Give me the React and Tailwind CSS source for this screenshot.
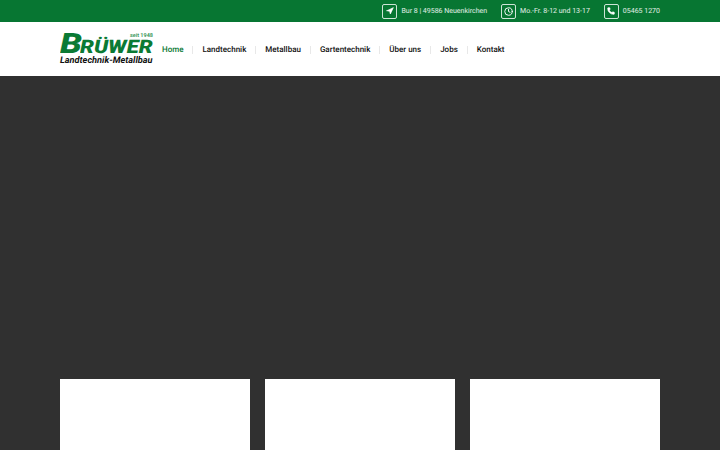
import { Clock, Phone, Navigation } from 'lucide-react';

const navItems = ['Home', 'Landtechnik', 'Metallbau', 'Gartentechnik', 'Über uns', 'Jobs', 'Kontakt'];

function TopItem({ icon, text }) {
  return (
    <div className="flex items-center gap-[4px]">
      <span className="w-[15px] h-[15px] border border-white/80 rounded-[2px] flex items-center justify-center text-white">
        {icon}
      </span>
      <span className="text-[7px] leading-none text-white/90">{text}</span>
    </div>
  );
}

function Logo() {
  return (
    <div className="w-[93px] flex flex-col items-stretch">
      <div className="relative h-[21px] flex items-end font-black italic text-[#0a7a34]">
        <span className="absolute right-0 top-[1px] text-[5.5px] leading-none font-bold not-italic text-[#3f9a5f]">seit 1948</span>
        <span className="w-[20px] h-[20px] text-[28px] leading-[20px] scale-x-125 origin-left">B</span>
        <span className="h-[13px] text-[18.5px] leading-[13px] scale-x-[1.19] origin-left whitespace-nowrap">RÜWER</span>
      </div>
      <div className="mt-[3px] text-[9.2px] leading-[8px] font-bold italic text-[#111] whitespace-nowrap">Landtechnik-Metallbau</div>
    </div>
  );
}

export default function App() {
  return (
    <div className="w-[720px] h-[450px] overflow-hidden bg-[#303030] font-['Roboto',sans-serif] [text-rendering:geometricPrecision] antialiased">
      <div className="h-[22px] bg-[#077632] flex items-center justify-end gap-[14px] pr-[60px]">
        <TopItem icon={<Navigation size={8} fill="white" />} text="Bur 8 | 49586 Neuenkirchen" />
        <TopItem icon={<Clock size={9} strokeWidth={2.5} />} text="Mo.-Fr. 8-12 und 13-17" />
        <TopItem icon={<Phone size={8} fill="white" />} text="05465 1270" />
      </div>
      <div className="h-[54px] bg-white flex items-center pl-[60px]">
        <Logo />
        <nav className="ml-[9px] mt-[2px] flex items-center">
          {navItems.map((item, i) => (
            <div key={item} className="flex items-center">
              {i > 0 && <span className="w-px h-[8px] bg-[#e8e8e8] mx-[9px]" />}
              <span className={`text-[8px] leading-none font-medium ${i === 0 ? 'text-[#077632]' : 'text-[#111]'}`}>{item}</span>
            </div>
          ))}
        </nav>
      </div>
      <div className="mt-[303px] px-[60px] grid grid-cols-3 gap-[15px]">
        <div className="h-[80px] bg-white" />
        <div className="h-[80px] bg-white" />
        <div className="h-[80px] bg-white" />
      </div>
    </div>
  );
}
